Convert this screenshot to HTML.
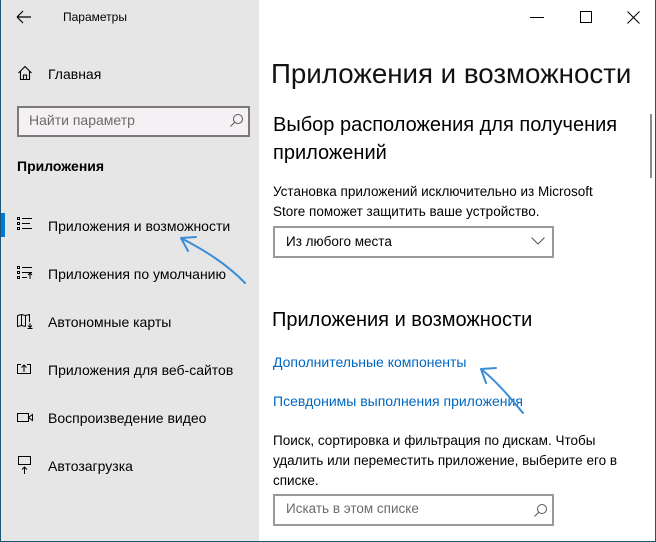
<!DOCTYPE html>
<html><head><meta charset="utf-8"><style>
*{margin:0;padding:0;box-sizing:border-box}
body{width:656px;height:542px;overflow:hidden;font-family:"Liberation Sans",sans-serif;color:#000;background:#fff;position:relative}
.win{position:absolute;left:0;top:0;width:656px;height:542px;border:1px solid #1d5572;border-top:none;}
.side{position:absolute;left:1px;top:0;width:258px;height:541px;background:#e6e6e6}
.t{position:absolute;white-space:nowrap}
.ic{position:absolute}
.s14{font-size:14px}
.link{color:#0067c0;font-size:14px}
</style></head><body>
<div class="win"></div>
<div class="side"></div>
<svg class="ic" style="left:16px;top:10px" width="16" height="14"><path d="M1 7H15M1 7L7 1M1 7L7 13" stroke="#000" stroke-width="1.2" fill="none"/></svg>
<div class="t" style="left:63px;top:10px;font-size:12px">Параметры</div>
<svg class="ic" style="left:17px;top:65px" width="16" height="16"><path d="M1.5 8L8 1.5L14.5 8M3.5 6V14.5H12.5V6M6.5 14.5V10H9.5V14.5" stroke="#000" stroke-width="1.1" fill="none"/></svg>
<div class="t s14" style="left:48px;top:66px">Главная</div>
<div class="ic" style="left:17px;top:106px;width:233px;height:31px;border:2px solid #7a7a7a;background:#f5f0f3"></div>
<div class="t s14" style="left:29px;top:112px;color:#6b6b6b">Найти параметр</div>
<svg class="ic" style="left:229px;top:113px" width="15" height="15"><circle cx="9" cy="6" r="4.5" stroke="#555" fill="none"/><path d="M6 9L1.5 13.5" stroke="#555"/></svg>
<div class="t" style="left:17px;top:158px;font-size:14px;font-weight:bold">Приложения</div>
<div class="ic" style="left:1px;top:213px;width:4px;height:24px;background:#0078d7"></div>
<svg class="ic" style="left:16px;top:216px" width="18" height="16"><g fill="none" stroke="#000" stroke-width="1"><rect x="1.5" y="1.5" width="2" height="2"/><rect x="1.5" y="6.5" width="2" height="2"/><rect x="1.5" y="11.5" width="2" height="2"/><path d="M6 2.5H16M6 7.5H14M6 12.5H16"/></g></svg>
<div class="t s14" style="left:48px;top:218px">Приложения и возможности</div>
<svg class="ic" style="left:16px;top:265px" width="18" height="16"><g fill="none" stroke="#000" stroke-width="1"><rect x="1.5" y="1.5" width="2" height="2"/><rect x="1.5" y="6.5" width="2" height="2"/><rect x="1.5" y="11.5" width="2" height="2"/><path d="M6 2.5H16M6 7.5H16M6 12.5H11M14 14V8M12 10L14 8L16 10"/></g></svg>
<div class="t s14" style="left:48px;top:266px">Приложения по умолчанию</div>
<svg class="ic" style="left:16px;top:313px" width="18" height="16"><g fill="none" stroke="#000" stroke-width="1"><path d="M1.5 2.5L5.5 1.5L9.5 2.5L13.5 1.5V9M1.5 2.5V13.5L5.5 12.5L9.5 13.5M5.5 1.5V12.5M9.5 2.5V13.5M14 10V14M12 12.5L14 14.5L16 12.5M11.5 15.5H16.5"/></g></svg>
<div class="t s14" style="left:48px;top:314px">Автономные карты</div>
<svg class="ic" style="left:16px;top:361px" width="18" height="16"><g fill="none" stroke="#000" stroke-width="1"><path d="M5 3.5H1.5V12.5H14.5V3.5H11M8 11V4M5.5 6.5L8 4L10.5 6.5"/></g></svg>
<div class="t s14" style="left:48px;top:362px">Приложения для веб-сайтов</div>
<svg class="ic" style="left:16px;top:410px" width="18" height="16"><g fill="none" stroke="#000" stroke-width="1"><rect x="1.5" y="3.5" width="11" height="8"/><path d="M12.5 7.5L16.5 4.5V10.5Z"/></g></svg>
<div class="t s14" style="left:48px;top:410px">Воспроизведение видео</div>
<svg class="ic" style="left:16px;top:455px" width="18" height="20"><g fill="none" stroke="#000" stroke-width="1"><rect x="2.5" y="1.5" width="12" height="8"/><path d="M8.5 19V12M6 14.5L8.5 12L11 14.5"/></g></svg>
<div class="t s14" style="left:48px;top:458px">Автозагрузка</div>
<div class="ic" style="left:530px;top:17px;width:14px;height:1px;background:#000"></div>
<div class="ic" style="left:580px;top:11px;width:12px;height:12px;border:1px solid #000"></div>
<svg class="ic" style="left:627px;top:11px" width="13" height="13"><path d="M0.5 0.5L12.5 12.5M12.5 0.5L0.5 12.5" stroke="#000" stroke-width="1"/></svg>
<div class="ic" style="left:650px;top:114px;width:2px;height:64px;background:#8a8a8a"></div>
<div class="t" style="left:271px;top:58px;font-size:27.7px;font-weight:300;color:#111">Приложения и возможности</div>
<div class="t" style="left:273px;top:111px;font-size:20px;line-height:28px">Выбор расположения для получения<br>приложений</div>
<div class="t s14" style="left:273px;top:182px;line-height:20px;font-size:13.5px">Установка приложений исключительно из Microsoft<br>Store поможет защитить ваше устройство.</div>
<div class="ic" style="left:273px;top:226px;width:281px;height:32px;border:2px solid #999;background:#fff"></div>
<div class="t s14" style="left:286px;top:234px;font-size:13.5px">Из любого места</div>
<svg class="ic" style="left:531px;top:237px" width="14" height="8"><path d="M0.5 0.5L7 7L13.5 0.5" stroke="#555" fill="none"/></svg>
<div class="t" style="left:272px;top:309px;font-size:20px">Приложения и возможности</div>
<div class="t link" style="left:273px;top:354px">Дополнительные компоненты</div>
<div class="t link" style="left:273px;top:393px">Псевдонимы выполнения приложения</div>
<div class="t" style="left:273px;top:431px;font-size:13.5px;line-height:20px">Поиск, сортировка и фильтрация по дискам. Чтобы<br>удалить или переместить приложение, выберите его в<br>списке.</div>
<div class="ic" style="left:273px;top:494px;width:281px;height:32px;border:2px solid #999;background:#fff"></div>
<div class="t s14" style="left:286px;top:501px;color:#6b6b6b;font-size:13.5px">Искать в этом списке</div>
<svg class="ic" style="left:533px;top:503px" width="15" height="15"><circle cx="9" cy="6" r="4.5" stroke="#555" fill="none"/><path d="M6 9L1.5 13.5" stroke="#555"/></svg>
<svg class="ic" style="left:0;top:0" width="656" height="542"><g stroke="#3a8ed8" stroke-width="2" fill="none" stroke-linecap="round"><path d="M245 283C225 262 200 248 181 238M181 238L196 237M181 238L188 251"/><path d="M523 413C508 395 495 380 481 369M481 369L496 368M481 369L486 383"/></g></svg>
</body></html>
